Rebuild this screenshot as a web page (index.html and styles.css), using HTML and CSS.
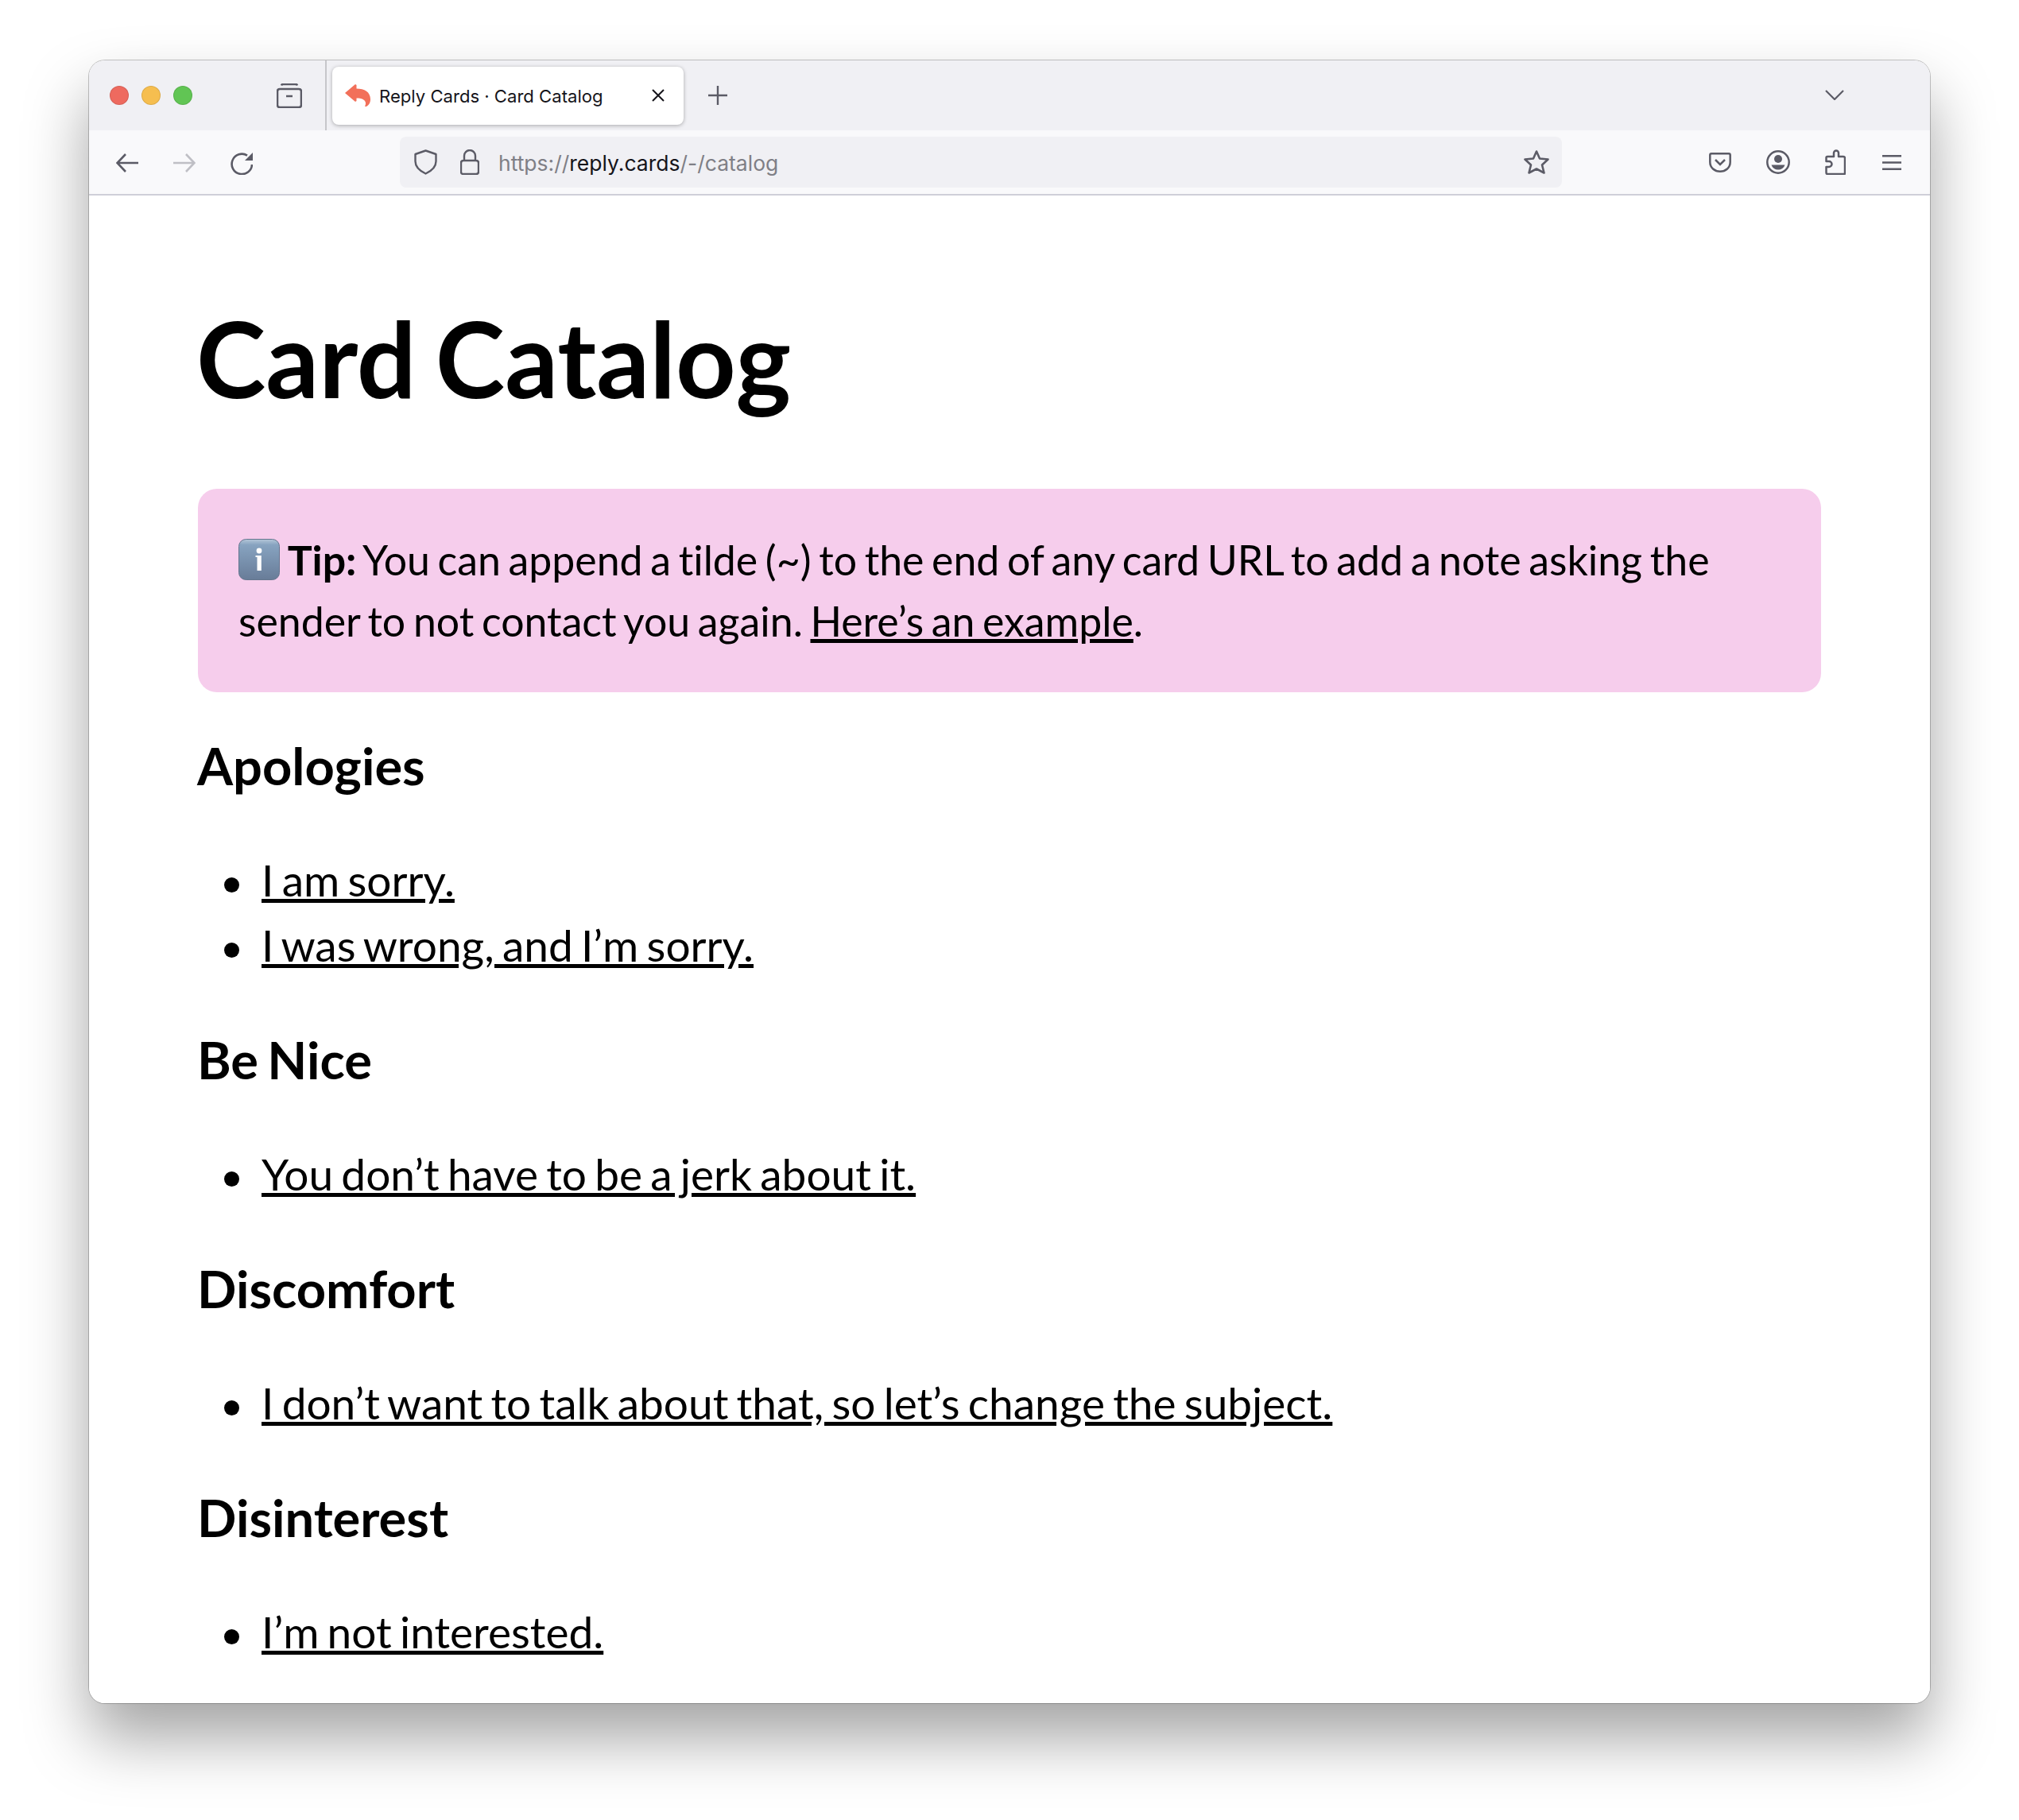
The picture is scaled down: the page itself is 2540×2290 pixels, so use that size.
FILE: index.html
```html
<!DOCTYPE html>
<html lang="en">
<head>
<meta charset="utf-8">
<title>Reply Cards · Card Catalog</title>
<link rel="stylesheet" href="styles.css">
</head>
<body>
<div class="window">
  <header class="tabstrip">
    <div class="lights"><span class="light red"></span><span class="light yellow"></span><span class="light green"></span></div>
    <svg class="ic archive" viewBox="0 0 32 31"><path d="M6 2.5 Q6.5 1 8 1 H24 Q25.5 1 26 2.5 M4 7 H28 Q31 7 31 10 V27 Q31 30 28 30 H4 Q1 30 1 27 V10 Q1 7 4 7 Z M12 16 H20" fill="none" stroke-width="2.6"/></svg>
    <span class="divider"></span>
    <div class="tab">
      <svg class="favicon" viewBox="0 0 32 28"><path d="M13 0 L14.5 1 V5.5 C24.5 5.5 32 9.5 32 19 C32 23 30 26.5 27 28 H25 C26.5 25 26.5 22 24 20 C22 18 18.5 17.5 14.5 17.5 V21 L13 22 L0 11 Z" fill="#f2705a"/></svg>
      <span class="tab-title">Reply Cards · Card Catalog</span>
      <svg class="ic close" viewBox="0 0 16 16"><path d="M1 1 L15 15 M15 1 L1 15" fill="none" stroke="#15141a" stroke-width="2"/></svg>
    </div>
    <svg class="ic plus" viewBox="0 0 24 24"><path d="M0 12 H24 M12 0 V24" fill="none" stroke-width="2.4"/></svg>
    <svg class="ic chevron" viewBox="0 0 24 13"><path d="M1 1 L12 12 L23 1" fill="none" stroke-width="2.2"/></svg>
  </header>
  <nav class="toolbar">
    <svg class="ic nav" viewBox="0 0 28 24"><path d="M12 1 L1.5 12 L12 23 M2 12 H28" fill="none" stroke-width="2.6"/></svg>
    <svg class="ic nav gap dim" viewBox="0 0 28 24"><path d="M16 1 L26.5 12 L16 23 M26 12 H0" fill="none" stroke-width="2.6"/></svg>
    <svg class="ic reload gap" viewBox="0 0 28 28"><path d="M27 15 A12.7 12.7 0 1 1 21 3.6" fill="none" stroke-width="2.6"/><path d="M28 0 V10 H18 Z" fill="#5b5b66" stroke="none"/></svg>
    <div class="urlbar">
      <svg class="ic shield" viewBox="0 0 29 32"><path d="M14.5 1.5 L27.5 6 V15 C27.5 22 22 27 14.5 30.5 C7 27 1.5 22 1.5 15 V6 Z" fill="none" stroke-width="2.4" stroke-linejoin="round"/></svg>
      <svg class="ic lock" viewBox="0 0 24 32"><path d="M5 14 V8 A7 7 0 0 1 19 8 V14 M4 14 H20 Q23 14 23 17 V28 Q23 31 20 31 H4 Q1 31 1 28 V17 Q1 14 4 14 Z" fill="none" stroke-width="2.4"/></svg>
      <span class="url">https://<b>reply.cards</b>/-/catalog</span>
      <svg class="ic star" viewBox="0 0 32 30"><path d="M16 1.5 L20 10.5 L30.5 11.5 L23 18.5 L25.5 28.5 L16 23.5 L6.5 28.5 L9 18.5 L1.5 11.5 L12 10.5 Z" fill="none" stroke-width="2.6" stroke-linejoin="round"/></svg>
    </div>
    <svg class="ic pocket" viewBox="0 0 28 25"><path d="M3 1.3 H25 Q26.7 1.3 26.7 3 V12 C26.7 19 21 23.7 14 23.7 C7 23.7 1.3 19 1.3 12 V3 Q1.3 1.3 3 1.3 Z M8 9 L14 15 L20 9" fill="none" stroke-width="2.5"/></svg>
    <svg class="ic account" viewBox="0 0 30 30"><circle cx="15" cy="15" r="13.7" fill="none" stroke-width="2.5"/><circle cx="15" cy="11" r="5" fill="#5b5b66" stroke="none"/><path d="M6.5 18.5 H23.5 C22 22.5 19 24.5 15 24.5 C11 24.5 8 22.5 6.5 18.5 Z" fill="#5b5b66" stroke="none"/></svg>
    <svg class="ic puzzle" viewBox="0 0 26 32"><path d="M3 31 H24 Q25 31 25 30 V11 Q25 9 23 9 H17 V4.5 A3 3 0 0 0 11 4.5 V9 H3 Q1.5 9 1.5 10.5 V15 H5 A3.3 3.3 0 0 1 5 22 H1.5 V29 Q1.5 31 3 31 Z" fill="none" stroke-width="2.5" stroke-linejoin="round"/></svg>
    <svg class="ic menu" viewBox="0 0 24 19"><path d="M0 1.3 H24 M0 9.5 H24 M0 17.7 H24" fill="none" stroke-width="2.5"/></svg>
  </nav>
  <main class="content">
    <h1 class="title">Card Catalog</h1>
    <p class="tip"><svg class="info" viewBox="0 0 52 52"><defs><linearGradient id="blue" x1="0" y1="0" x2="0" y2="1"><stop offset="0" stop-color="#b4c6d8"/><stop offset=".14" stop-color="#87a3c0"/><stop offset="1" stop-color="#687c98"/></linearGradient></defs><rect x=".5" y=".5" width="51" height="51" rx="9" fill="url(#blue)" stroke="#66768e"/><circle cx="26" cy="15" r="3.4" fill="#fff"/><path d="M21.5 21 H28.8 V40 H23.5 V23 H21.5 Z" fill="#fff"/></svg> <strong>Tip:</strong> You can append a tilde (~) to the end of any card URL to add a note asking the sender to not contact you again. <a href="#">Here’s an example</a>.</p>
    <h2 class="section">Apologies</h2>
    <ul class="cards">
      <li><a href="#">I am sorry.</a></li>
      <li><a href="#">I was wrong, and I’m sorry.</a></li>
    </ul>
    <h2 class="section">Be Nice</h2>
    <ul class="cards">
      <li><a href="#">You don’t have to be a jerk about it.</a></li>
    </ul>
    <h2 class="section">Discomfort</h2>
    <ul class="cards">
      <li><a href="#">I don’t want to talk about that, so let’s change the subject.</a></li>
    </ul>
    <h2 class="section">Disinterest</h2>
    <ul class="cards">
      <li><a href="#">I’m not interested.</a></li>
    </ul>
  </main>
</div>
</body>
</html>
```
FILE: styles.css
```css
* { box-sizing: border-box; }
html, body { margin: 0; height: 2290px; background: #fff; }
body { padding: 76px 112px 147px; font-family: Lato, sans-serif; color: #000; overflow: hidden; }
.window {
  height: 2067px;
  border-radius: 20px;
  background: #fff;
  overflow: hidden;
  display: flex;
  flex-direction: column;
  box-shadow: 0 0 0 1px rgba(0,0,0,.22), 0 44px 80px rgba(0,0,0,.36);
}
.ic { flex: none; stroke: #5b5b66; display: block; }
.tabstrip { height: 88px; flex: none; display: flex; align-items: center; background: #f0f0f4; padding-right: 108px; }
.lights { display: flex; gap: 16px; margin-left: 26px; }
.light { width: 24px; height: 24px; border-radius: 50%; border: 1px solid rgba(0,0,0,.1); }
.red { background: #ee6a5f; }
.yellow { background: #f6be4f; }
.green { background: #61c554; }
.archive { width: 32px; height: 31px; margin-left: 106px; }
.divider { width: 2px; height: 88px; margin-left: 29px; background: #c6c6ca; }
.tab { width: 442px; height: 73px; margin-left: 7px; padding: 0 24px 0 16px; background: #fff; border-radius: 8px; display: flex; align-items: center; box-shadow: 0 1px 5px rgba(0,0,0,.3); }
.favicon { width: 32px; height: 28px; flex: none; }
.tab-title { flex: 1; margin-left: 11px; padding-top: 2px; font: 400 22.1px Inter, sans-serif; color: #15141a; white-space: nowrap; }
.close { width: 16px; height: 16px; }
.plus { width: 24px; height: 24px; margin-left: 31px; }
.chevron { width: 24px; height: 13px; margin: 0 0 2px auto; }
.toolbar { height: 82px; flex: none; display: flex; align-items: center; background: #f9f9fb; padding-left: 34px; border-bottom: 2px solid #cfcfd8; }
.nav { width: 28px; height: 24px; margin-top: 2px; }
.gap { margin-left: 44px; }
.dim { stroke: #bfbfc5; }
.reload { width: 28px; height: 28px; margin-top: 4px; }
.urlbar { width: 1462px; height: 64px; margin-left: 185px; padding: 0 16px 0 18px; background: #f0f0f4; border-radius: 8px; display: flex; align-items: center; }
.shield { width: 29px; height: 32px; }
.lock { width: 24px; height: 32px; margin-left: 29px; }
.url { margin-left: 24px; padding-top: 2px; font: 400 26.5px Inter, sans-serif; color: #7f7f86; white-space: nowrap; }
.url b { font-weight: 400; color: #15141a; }
.star { width: 32px; height: 30px; margin-left: auto; }
.pocket { width: 28px; height: 25px; margin-left: 185px; }
.account { width: 30px; height: 30px; margin-left: 44px; }
.puzzle { width: 26px; height: 32px; margin-left: 44px; }
.menu { width: 24px; height: 19px; margin-left: 46px; }
.content { flex: 1; padding: 0 137px; overflow: hidden; background: #fff; text-rendering: optimizeLegibility; font-variant-ligatures: no-common-ligatures; }
.title { margin: 126px 0 0 -2px; font-size: 132px; font-weight: 700; line-height: 156px; word-spacing: -.06em; }
.tip { margin: 87px 0 0; padding: 51px; background: #f6cdec; border-radius: 24px; font-size: 51.8px; line-height: 77px; word-spacing: -.07em; }
.info { width: 52px; height: 52px; vertical-align: -6px; }
.section { margin: 64px 0 0 -1px; font-size: 65px; font-weight: 700; line-height: 78px; word-spacing: -.07em; }
.tip + .section { margin-top: 53px; }
.cards { margin: 64px 0 0; padding: 0 0 0 80px; list-style: none; font-size: 55px; line-height: 82px; word-spacing: -.07em; }
.cards li::before { content: ""; display: inline-block; width: 19px; height: 19px; margin: 0 28px 0 -47px; border-radius: 50%; background: #000; vertical-align: 5px; }
a { color: inherit; text-decoration: underline; }
```
